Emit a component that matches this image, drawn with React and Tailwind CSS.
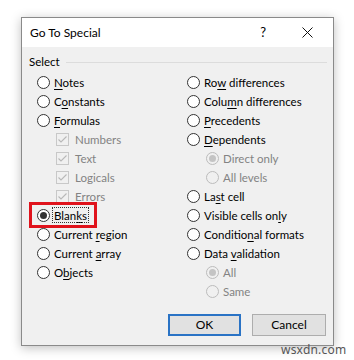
import React from "react";

function Radio({ checked, disabled }) {
  return (
    <span
      className={
        "w-[13px] h-[13px] rounded-full border flex items-center justify-center shrink-0 " +
        (disabled ? "border-[#bcbcbc] bg-[#f0f0f0]" : "border-[#333333] bg-white")
      }
    >
      {checked && (
        <span
          className={
            "w-[7px] h-[7px] rounded-full " +
            (disabled ? "bg-[#c4c4c4]" : "bg-[#333333]")
          }
        />
      )}
    </span>
  );
}

function Check() {
  return (
    <span className="w-[13px] h-[13px] border border-[#c8c8c8] flex items-center justify-center shrink-0">
      <svg width="11" height="11" viewBox="0 0 11 11">
        <path d="M1.5 5.5 L4 8 L9.5 2.5" fill="none" stroke="#b8b8b8" strokeWidth="1.1" />
      </svg>
    </span>
  );
}

function Label({ text, u }) {
  if (u == null) return <span>{text}</span>;
  return (
    <span>
      {text.slice(0, u)}
      <span className="underline underline-offset-2">{text[u]}</span>
      {text.slice(u + 1)}
    </span>
  );
}

function Row({ text, u, kind = "radio", sub, checked, disabled, children }) {
  return (
    <div
      className={
        "h-[19px] flex items-center gap-[4px] relative " +
        (sub ? "pl-[19px] " : "") +
        (disabled ? "text-[#838383]" : "text-black")
      }
    >
      {kind === "check" ? <Check /> : <Radio checked={checked} disabled={disabled} />}
      {kind === "check" ? <span className="ml-[2px]">{text}</span> : <Label text={text} u={u} />}
      {children}
    </div>
  );
}

export default function App() {
  return (
    <div
      className="w-[354px] h-[360px] bg-white pt-[17px] pl-[21px] relative"
      style={{ fontFamily: 'Lato, "Noto Sans", sans-serif' }}
    >
      <div className="w-[313px] h-[329px] border border-[#8a8a8a] bg-[#f0f0f0] shadow-[0_2px_10px_rgba(0,0,0,0.25)] flex flex-col text-[11.5px]">
        <div className="h-[29px] bg-white flex items-center pl-[8px] pr-[20px] shrink-0">
          <span className="text-[12px] text-black flex-1">Go To Special</span>
          <span className="text-[13px] text-black mr-[36px]">?</span>
          <svg width="11" height="11" viewBox="0 0 11 11">
            <path d="M0.5 0.5 L10.5 10.5 M10.5 0.5 L0.5 10.5" stroke="#111" strokeWidth="1" />
          </svg>
        </div>

        <div className="flex items-center pl-[7px] pr-[6px] h-[30px]">
          <span className="text-black">Select</span>
          <span className="flex-1 h-px bg-[#dcdcdc] ml-[6px]" />
        </div>

        <div className="flex pl-[15px] -mt-[4px]">
          <div className="w-[150px] flex flex-col">
            <Row text="Notes" u={0} />
            <Row text="Constants" u={1} />
            <Row text="Formulas" u={0} />
            <Row text="Numbers" kind="check" sub disabled />
            <Row text="Text" kind="check" sub disabled />
            <Row text="Logicals" kind="check" sub disabled />
            <Row text="Errors" kind="check" sub disabled />
            <Row text="Blanks" u={4} checked>
              <span className="absolute left-[15px] top-[1px] w-[37px] h-[16px] border border-dotted border-[#333]" />
              <span className="absolute -left-[8px] -top-[4px] w-[68px] h-[26px] border-[3px] border-[#e0131c]" />
            </Row>
            <Row text="Current region" u={8} />
            <Row text="Current array" u={8} />
            <Row text="Objects" u={1} />
          </div>
          <div className="flex flex-col">
            <Row text="Row differences" u={2} />
            <Row text="Column differences" u={4} />
            <Row text="Precedents" u={0} />
            <Row text="Dependents" u={0} />
            <Row text="Direct only" sub disabled checked />
            <Row text="All levels" sub disabled />
            <Row text="Last cell" u={2} />
            <Row text="Visible cells only" u={16} />
            <Row text="Conditional formats" u={8} />
            <Row text="Data validation" u={5} />
            <Row text="All" sub disabled checked />
            <Row text="Same" sub disabled />
          </div>
        </div>

        <div className="flex justify-end gap-[11px] pr-[7px] mt-[13px]">
          <button className="w-[73px] h-[22px] bg-[#e1e1e1] border-2 border-[#2a73c5] text-black text-[12px]">
            OK
          </button>
          <button className="w-[74px] h-[22px] bg-[#e1e1e1] border border-[#adadad] text-black text-[12px]">
            Cancel
          </button>
        </div>
      </div>
      <div className="absolute left-[281px] top-[341px] text-[12px] text-[#555] tracking-[0.2px]" style={{ fontFamily: '"Noto Sans", sans-serif' }}>
        wsxdn.com
      </div>
    </div>
  );
}
